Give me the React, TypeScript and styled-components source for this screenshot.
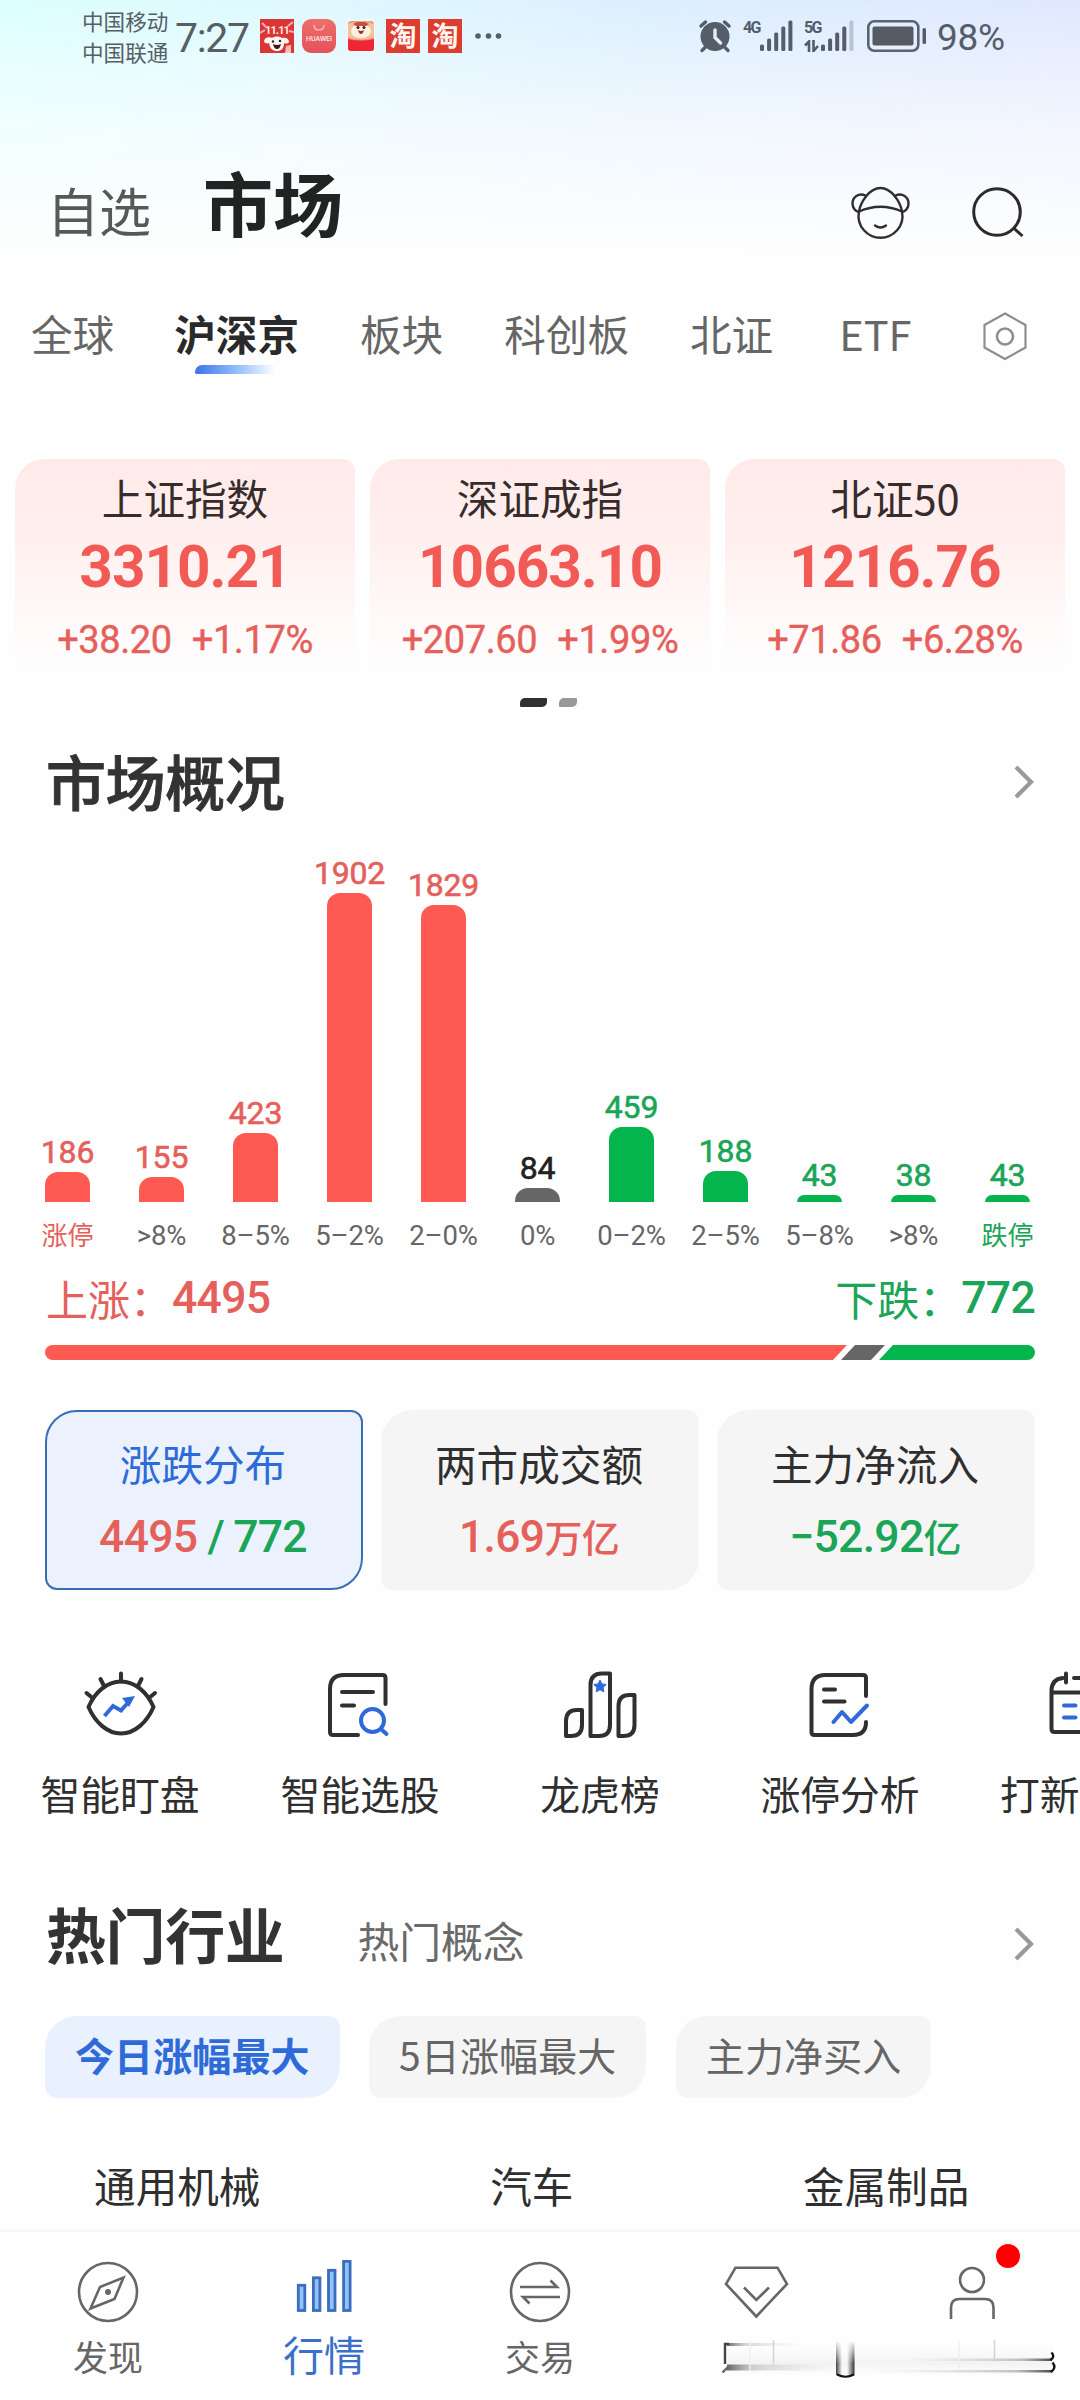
import React from "react";
import styled, { createGlobalStyle, css } from "styled-components";

const RED = "#ff5a52";
const RED_TEXT = "#e5605b";
const GREEN = "#04b44c";
const GREEN_TEXT = "#1ba558";
const BLUE = "#2f6bd8";
const INK = "#2f2f2f";
const GREY = "#666666";

const CJK = `"Noto Sans CJK SC", "Noto Sans", sans-serif`;
const NUM = `Roboto, "Noto Sans CJK SC", sans-serif`;

const GlobalStyle = createGlobalStyle`
  * { box-sizing: border-box; }
  body { margin: 0; background: #fefefe; font-family: ${CJK}; }
`;

const Page = styled.div`
  width: 1080px;
  height: 2400px;
  overflow: hidden;
  display: flex;
  flex-direction: column;
  color: ${INK};
  white-space: nowrap;
  background:
    linear-gradient(180deg, rgba(254, 254, 254, 0) 0, rgba(254, 254, 254, 0.62) 125px, #fefefe 260px),
    linear-gradient(90deg, #dcfffe 0, #dff8ff 30%, #dceffe 60%, #e0e8fe 100%);
`;

/* ---------- status bar ---------- */

const StatusBar = styled.header`
  height: 74px;
  flex: none;
  display: flex;
  align-items: center;
  padding: 0 75px 2px 82px;
  color: #566064;
`;

const Carriers = styled.div`
  width: 93px;
  font-size: 21.6px;
  line-height: 31px;
`;

const Clock = styled.div`
  font: 400 41px/44px ${NUM};
  letter-spacing: -1.3px;
  width: 85px;
  padding-top: 4px;
`;

const AppIcons = styled.div`
  display: flex;
  align-items: center;
  gap: 8px;
`;

const Taobao = styled.div`
  width: 34px;
  height: 34px;
  background: #dd3d2e;
  color: #fff6f0;
  font: 700 27px/31px ${CJK};
  text-align: center;
`;

const HuaweiIcon = styled.div`
  width: 34px;
  height: 34px;
  border-radius: 9px;
  background: linear-gradient(#ee6f6a, #e25259);
  color: #ffe9e6;
  display: flex;
  flex-direction: column;
  align-items: center;
  font: 500 7px/9px ${NUM};
  gap: 4px;
  padding-top: 6px;
`;

const StatusRight = styled.div`
  margin-left: auto;
  display: flex;
  align-items: center;
  color: #555d68;
`;

const Signal = styled.div<{ $gap: number }>`
  display: flex;
  margin-left: ${(p) => p.$gap}px;
  height: 32px;
`;

const NetLabel = styled.div`
  width: 17px;
  display: flex;
  flex-direction: column;
  justify-content: space-between;
  font: 700 16px/16px ${NUM};
  letter-spacing: -1.6px;
`;

const Percent = styled.div`
  font: 400 37px/40px ${NUM};
  letter-spacing: -0.3px;
  margin-left: 10px;
  padding-top: 4px;
  width: 68px;
`;

/* ---------- title and tabs ---------- */

const TitleBar = styled.div`
  height: 216px;
  flex: none;
  display: flex;
  align-items: center;
  padding: 0 56px 0 47px;
`;

const SideTitle = styled.div`
  font-size: 52px;
  line-height: 60px;
  color: #555958;
  padding-top: 56px;
  width: 156px;
`;

const MainTitle = styled.h1`
  margin: 0;
  font-size: 70px;
  line-height: 80px;
  font-weight: 700;
  color: #222424;
  padding-top: 39px;
`;

const TitleActions = styled.div`
  margin-left: auto;
  padding-top: 62px;
  display: flex;
  align-items: center;
  gap: 61px;
`;

const Tabs = styled.nav`
  height: 112px;
  flex: none;
  display: flex;
  align-items: flex-start;
  padding: 12px 52px 0 31px;
`;

const Tab = styled.div<{ $gap: number; $active?: boolean }>`
  display: flex;
  flex-direction: column;
  align-items: center;
  margin-left: ${(p) => p.$gap}px;
  font-size: 41.6px;
  line-height: 62px;
  color: ${(p) => (p.$active ? "#2a2a2a" : GREY)};
  font-weight: ${(p) => (p.$active ? 700 : 400)};
`;

const TabMark = styled.div`
  width: 84px;
  height: 9px;
  border-radius: 8px 0 8px 2px;
  margin-top: 1px;
  background: linear-gradient(90deg, #3d72ea, #9fc6fb 55%, #ffffff 96%);
`;

const TabSettings = styled.div`
  margin-left: auto;
  height: 66px;
  padding-top: 2px;
  display: flex;
  align-items: center;
`;

/* ---------- index cards ---------- */

const IndexRow = styled.section`
  display: flex;
  gap: 15px;
  padding: 57px 15px 0;
  height: 277px;
  flex: none;
`;

const IndexCard = styled.div`
  flex: 1;
  border-radius: 30px 12px 0 0;
  background: linear-gradient(#feeae9 0, #fff0ef 38%, #fff9f9 72%, #fefefe 98%);
  text-align: center;
  color: ${RED_TEXT};
`;

const IndexName = styled.div`
  font-size: 41.6px;
  line-height: 60px;
  color: #362c2c;
  padding-top: 8px;
`;

const IndexValue = styled.div`
  font: 700 58.5px/70px ${NUM};
  letter-spacing: -1px;
  color: #f25a55;
  padding-top: 5px;
`;

const IndexChange = styled.div`
  display: flex;
  justify-content: center;
  gap: 20px;
  font: 400 38px/50px ${NUM};
  letter-spacing: -0.4px;
  -webkit-text-stroke: 0.4px currentColor;
  padding-top: 13px;
`;

const Pager = styled.div`
  height: 34px;
  flex: none;
  display: flex;
  gap: 12px;
  padding: 18.5px 0 0 520px;
`;

const PagerDot = styled.i<{ $active?: boolean }>`
  width: ${(p) => (p.$active ? 27 : 18)}px;
  height: 9px;
  border-radius: 5px 1px;
  background: ${(p) => (p.$active ? "#303030" : "#999")};
`;

/* ---------- market overview ---------- */

const SectionHead = styled.div<{ $height: number }>`
  height: ${(p) => p.$height}px;
  flex: none;
  display: flex;
  align-items: center;
  padding: 0 44px 0 46px;
`;

const SectionTitle = styled.h2<{ $weight: number }>`
  margin: 0;
  font-size: 60px;
  line-height: 80px;
  font-weight: ${(p) => p.$weight};
  color: #333;
  letter-spacing: -0.4px;
  -webkit-text-stroke: ${(p) => (p.$weight < 600 ? "0.9px" : "0")} currentColor;
`;

const SectionAlt = styled.div`
  font-size: 41.8px;
  line-height: 60px;
  color: #6a6a6a;
  padding-top: 14px;
  margin-left: 73px;
`;

const HeadArrow = styled.div<{ $drop: number }>`
  margin-left: auto;
  padding-top: ${(p) => p.$drop}px;
  display: flex;
`;

const Chart = styled.div`
  height: 356px;
  flex: none;
  display: grid;
  grid-template-columns: repeat(11, 94px);
  align-items: end;
  padding-left: 20.5px;
`;

const ChartColumn = styled.div`
  display: flex;
  flex-direction: column;
  align-items: center;
`;

const ChartValue = styled.div<{ $color: string }>`
  font: 400 32px/36px ${NUM};
  letter-spacing: -0.2px;
  -webkit-text-stroke: 0.6px currentColor;
  color: ${(p) => p.$color};
  padding-bottom: 2px;
`;

const ChartBar = styled.div<{ $color: string }>`
  width: 45px;
  border-radius: 13px 13px 0 0;
  background: ${(p) => p.$color};
`;

const ChartLabels = styled.div`
  height: 62px;
  flex: none;
  display: grid;
  grid-template-columns: repeat(11, 94px);
  align-items: center;
  justify-items: center;
  padding: 6px 0 0 20.5px;
`;

const ChartLabel = styled.div<{ $color: string }>`
  color: ${(p) => p.$color};
  font: 400 27.5px/36px ${NUM};
  letter-spacing: -0.2px;
  span { font-size: 26px; letter-spacing: 0; }
`;

const Totals = styled.div`
  height: 66px;
  flex: none;
  display: flex;
  justify-content: space-between;
  padding: 0 45px 0 46px;
`;

const Total = styled.div<{ $color: string }>`
  color: ${(p) => p.$color};
  display: flex;
  align-items: center;
  font-size: 42px;
  line-height: 59px;
  b {
    font: 500 44.5px/60px ${NUM};
    letter-spacing: -0.7px;
    padding-top: 2px;
  }
`;

const Ratio = styled.div`
  height: 15px;
  flex: none;
  margin: 15px 45px 0;
  display: flex;
  border-radius: 7.5px;
  overflow: hidden;
`;

const RatioPart = styled.i<{ $color: string; $shape: string }>`
  background: ${(p) => p.$color};
  clip-path: ${(p) => p.$shape};
  margin-right: -6px;
  &:last-child { margin-right: 0; }
`;

/* ---------- stat cards ---------- */

const StatRow = styled.section`
  display: flex;
  gap: 18px;
  padding: 50px 45px 0;
  height: 230px;
  flex: none;
`;

const StatCard = styled.div<{ $active?: boolean }>`
  flex: 1;
  display: flex;
  flex-direction: column;
  align-items: center;
  border-radius: 32px 12px;
  background: #f5f5f5;
  border: 2px solid #f5f5f5;
  ${(p) =>
    p.$active &&
    css`
      background: #ebf2fe;
      border-color: #3a6db8;
    `}
`;

const StatName = styled.div<{ $active?: boolean }>`
  font-size: 41.6px;
  line-height: 60px;
  padding-top: 21px;
  margin-left: -2px;
  color: ${(p) => (p.$active ? BLUE : INK)};
`;

const StatValue = styled.div<{ $color?: string }>`
  display: flex;
  align-items: baseline;
  font: 500 44.5px/60px ${NUM};
  letter-spacing: -0.7px;
  padding-top: 14px;
  margin-left: -2px;
  color: ${(p) => p.$color};
  small { font-size: 38px; }
`;

const Tint = styled.span<{ $color: string; $gap?: number }>`
  color: ${(p) => p.$color};
  margin-left: ${(p) => p.$gap ?? 0}px;
`;

/* ---------- shortcuts ---------- */

const Shortcuts = styled.section`
  height: 292px;
  flex: none;
  display: flex;
  padding-top: 79px;
  overflow: hidden;
`;

const Shortcut = styled.div`
  width: 240px;
  flex: none;
  display: flex;
  flex-direction: column;
  align-items: center;
  font-size: 39.8px;
  line-height: 56px;
  gap: 24px;
`;

const ShortcutName = styled.div<{ $wide?: boolean }>`
  min-width: ${(p) => (p.$wide ? "160px" : "0")};
`;

/* ---------- hot industries ---------- */

const Chips = styled.div`
  display: flex;
  gap: 29.5px;
  padding: 32px 45px 0;
  height: 114px;
  flex: none;
`;

const Chip = styled.div<{ $active?: boolean }>`
  padding: 0 30px;
  border-radius: 32px 12px;
  font-size: 39px;
  line-height: 77px;
  letter-spacing: 0.1px;
  background: ${(p) => (p.$active ? "#eaf1fe" : "#f5f5f5")};
  color: ${(p) => (p.$active ? BLUE : GREY)};
  font-weight: ${(p) => (p.$active ? 700 : 400)};
`;

const Industries = styled.div`
  height: 131px;
  flex: none;
  display: grid;
  grid-template-columns: repeat(3, 354.5px);
  text-align: center;
  font-size: 41.6px;
  line-height: 60px;
  padding-top: 57px;
`;

/* ---------- bottom navigation ---------- */

const BottomNav = styled.nav`
  flex: 1;
  display: grid;
  grid-template-columns: repeat(5, 216px);
  border-top: 3px solid #f8f8f8;
  background: #fefefe;
`;

const NavItem = styled.div<{ $active?: boolean }>`
  display: flex;
  flex-direction: column;
  align-items: center;
  padding-top: 28px;
  font-size: ${(p) => (p.$active ? 41 : 35)}px;
  line-height: 50px;
  color: ${(p) => (p.$active ? "#3a70c8" : GREY)};
`;

const NavName = styled.div<{ $active?: boolean }>`
  margin-top: ${(p) => (p.$active ? 4 : 7)}px;
`;

const NavPair = styled.div`
  grid-column: span 2;
  display: flex;
  padding: 10px 0 0 56px;
`;

/* ---------- drawings ---------- */

const Drawing = styled.svg`
  display: block;
  flex: none;
  fill: none;
`;

function JdIcon() {
  return (
    <Drawing width="34" height="34" viewBox="0 0 34 34">
      <rect width="34" height="34" fill="#dc3634" />
      <path d="M0 14 5 11M2 4l4 4M28 7l5-4M29 12l5 1" stroke="#f7a9c8" strokeWidth="2" />
      <text x="17" y="15" textAnchor="middle" fontFamily="Roboto, sans-serif" fontWeight="700" fontSize="11" letterSpacing="-0.900" fill="#ffe9e3">11.11</text>
      <path d="M4 22c1-5 7-4 8-3 3-2 7-2 10 0 3-1 6 0 7 3 0 3-3 3-5 2 0 6-3 8-7 8s-7-2-8-8c-2 1-5 0-5-2z" fill="#fff4f4" />
      <circle cx="13" cy="22.500" r="1.200" fill="#222" />
      <circle cx="20" cy="22" r="1.200" fill="#222" />
      <path d="M13 25q4 2 8 0-1 5-4 5t-4-5z" fill="#3a1518" />
      <path d="M26 27l5-1v8h-6z" fill="#fbb" />
    </Drawing>
  );
}

function LionIcon() {
  return (
    <Drawing width="34" height="34" viewBox="0 0 34 34">
      <rect x="3" y="1" width="28" height="32" rx="3" fill="#fff5ee" />
      <rect x="4" y="2" width="26" height="30" rx="3" fill="#e89a80" />
      <path d="M4 5q13-5 26 0v13q-13 5-26 0z" fill="#f0c3a2" />
      <ellipse cx="17" cy="12" rx="10" ry="7" fill="#fff0df" />
      <path d="M9 5l4-2h8l4 2-3 2H12z" fill="#c9503f" />
      <circle cx="14" cy="8.500" r="1.500" fill="#3a2020" />
      <circle cx="20" cy="8.500" r="1.500" fill="#3a2020" />
      <path d="M14 11q3 2 6 0-1 4-3 4t-3-4z" fill="#a02a25" />
      <path d="M4 20q13 3 26 0v9q0 3-3 3H7q-3 0-3-3z" fill="#ee2638" />
    </Drawing>
  );
}

function DotsIcon() {
  return (
    <Drawing width="28" height="8" viewBox="0 0 28 8" style={{ marginLeft: 13 }}>
      <g fill="currentColor">
        <circle cx="3" cy="4" r="2.800" />
        <circle cx="13.500" cy="4" r="2.800" />
        <circle cx="23.500" cy="4" r="2.800" />
      </g>
    </Drawing>
  );
}

function AlarmIcon() {
  return (
    <Drawing width="34" height="34" viewBox="699 19.500 34 34">
      <g stroke="#555d68" strokeLinecap="round">
        <circle cx="716" cy="37" r="14.500" fill="#555d68" stroke="none" />
        <path d="M702 26.500l4.500-4M730 26.500l-4.500-4M707 47l-4 4M725 47l4 4" strokeWidth="3.400" />
        <path d="M716 30.500v7.500l5.500 5.500" stroke="#e3effb" strokeWidth="3.400" />
      </g>
    </Drawing>
  );
}

function SignalBars({ weak }: { weak?: boolean }) {
  const tops = [24.5, 18.5, 12.5, 6.5, 0.5];
  return (
    <Drawing width="33" height="32" viewBox="0 0 33 32">
      {tops.map((top, i) => (
        <rect key={top} x={i * 7.1} y={top} width="4" height={31 - top} rx="1.500" fill={weak && i === 4 ? "#bac4d0" : "#555d68"} />
      ))}
    </Drawing>
  );
}

function BatteryIcon() {
  return (
    <Drawing width="60" height="34" viewBox="867 19.500 60 34" style={{ marginLeft: 13 }}>
      <rect x="868.300" y="21.800" width="50" height="29.500" rx="6" stroke="#5b6370" strokeWidth="2.600" />
      <rect x="872.500" y="27" width="41" height="19" rx="2" fill="#555a63" />
      <rect x="922.500" y="28.500" width="3.500" height="16" rx="1.500" fill="#555d68" />
    </Drawing>
  );
}

function FaceIcon() {
  return (
    <Drawing width="60" height="56" viewBox="850.500 186 60 56">
      <g stroke="#2f2f2f" strokeWidth="2.400" strokeLinecap="round">
        <path d="M859.500 212.500C861 203 870 189 881 189s20 14 21.500 23.500" />
        <path d="M859.500 212.500q21.500-9.500 43 0" />
        <path d="M859.500 212.500c-3 15 9 26.300 21.500 26.300s24.500-11.300 21.500-26.300" />
        <path d="M866 196.500c-7-3-13 1.500-13 8 0 4 2.500 8 6.500 8.500M896 196.500c7-3 13 1.500 13 8 0 4-2.500 8-6.500 8.500" />
        <path d="M875.500 226.500q5.500 4 11 0" />
      </g>
    </Drawing>
  );
}

function SearchIcon() {
  return (
    <Drawing width="53" height="52" viewBox="971.500 186 53 52">
      <g stroke="#2b2b2b" strokeWidth="3">
        <circle cx="997.500" cy="211" r="23.300" />
        <path d="M1013.500 226.500l9.500 8.500" />
      </g>
    </Drawing>
  );
}

function HexIcon() {
  return (
    <Drawing width="46" height="52" viewBox="982 309 46 52">
      <g stroke="#8e8e8e" strokeWidth="2.200">
        <path d="M1005 312.500l20.500 11.500v22.500L1005 358l-20.500-11.500V324z" />
        <circle cx="1005" cy="335.500" r="8" strokeWidth="2.600" />
      </g>
    </Drawing>
  );
}

function Chevron() {
  return (
    <Drawing width="22" height="34" viewBox="0 0 22 34">
      <path d="M2 2l15 15L2 32" stroke="#999" strokeWidth="4.200" />
    </Drawing>
  );
}

const line = { stroke: "#303030", strokeWidth: 4, strokeLinecap: "round", strokeLinejoin: "round" } as const;
const accent = { stroke: BLUE, strokeWidth: 4, strokeLinecap: "round", strokeLinejoin: "round" } as const;

function WatchIcon() {
  return (
    <Drawing width="76" height="72" viewBox="82 1668 76 72">
      <g {...line}>
        <path d="M88.500 1706C95 1691 107 1680.500 121 1680.500s26 10.500 32.500 25.500C147 1721 135 1732.500 121 1732.500S95 1721 88.500 1706z" />
        <path d="M121 1672.500v8M100.500 1678l3 6M141.500 1678l-3 6M86.500 1692l6 5M155 1692l-6 5" />
      </g>
      <path {...accent} strokeLinecap="butt" strokeLinejoin="miter" d="M104.500 1715l8.500-10 8 4.500 8-9" />
      <path d="M122 1697l13-2-6 11z" fill={BLUE} />
    </Drawing>
  );
}

function PickIcon() {
  return (
    <Drawing width="76" height="72" viewBox="322 1668 76 72">
      <path {...line} d="M385.500 1703v-26q0-3-3-3H344q-14 0-14 14v43q0 3 3 3h25M342 1691h31M342 1704.500h12" />
      <g {...accent}>
        <circle cx="372.500" cy="1719.500" r="11.500" />
        <path d="M381.500 1728.500l5 4.500" />
      </g>
    </Drawing>
  );
}

function RankIcon() {
  return (
    <Drawing width="76" height="72" viewBox="562 1668 76 72">
      <g {...line}>
        <path d="M566 1735v-15q0-11 11-11h5v15q0 11-11 11z" />
        <path d="M590.500 1735v-51q0-11.500 11.500-11.500h8V1724q0 11-11 11z" />
        <path d="M618.500 1735v-30q0-11 11-11h5v30q0 11-11 11z" />
      </g>
      <path d="M600 1679l1.900 3.900 4.300.6-3.100 3 .7 4.300-3.800-2-3.800 2 .7-4.300-3.100-3 4.300-.6z" fill={BLUE} stroke={BLUE} />
    </Drawing>
  );
}

function AnalysisIcon() {
  return (
    <Drawing width="76" height="72" viewBox="802 1668 76 72">
      <path {...line} d="M866 1695v-18q0-3-3-3h-37.500q-14 0-14 14v43q0 3 3 3H853q13 0 13-13M824 1688.500h11M824 1700.500h20.500" />
      <path {...accent} d="M833.500 1721l8.500-10 9 10 16-16.500" />
    </Drawing>
  );
}

function CalendarIcon() {
  return (
    <Drawing width="76" height="72" viewBox="1042 1668 76 72">
      <path {...line} d="M1063 1677q-11.500 1-11.500 13v38q0 3 3 3h50V1691M1052 1691.500h52M1066 1672.500v9M1074 1677h22" />
      <path {...accent} d="M1064 1704.500h11.500M1064 1716.500h11.500M1086 1704.500h11" />
    </Drawing>
  );
}

function CompassIcon() {
  return (
    <Drawing width="64" height="64" viewBox="76 2260 64 64">
      <g stroke={GREY} strokeWidth="2.600">
        <circle cx="108" cy="2292" r="29" />
        <path d="M123.500 2277.500l-9 21.500-24 9.500 9.500-21.500z" />
      </g>
      <circle cx="108" cy="2292" r="3" fill={GREY} />
    </Drawing>
  );
}

function QuotesIcon() {
  return (
    <Drawing width="64" height="64" viewBox="292 2260 64 64">
      {[2284, 2276.5, 2269, 2260].map((top, i) => (
        <rect key={top} x={298.3 + i * 15.1} y={top + 1.3} width="6.500" height={2310.5 - top - 1.3} fill="#93c2fb" stroke="#3a6dbd" strokeWidth="2.800" />
      ))}
    </Drawing>
  );
}

function TradeIcon() {
  return (
    <Drawing width="64" height="64" viewBox="508 2260 64 64">
      <g stroke={GREY} strokeWidth="2.600">
        <circle cx="540" cy="2292" r="29" />
        <path d="M520 2287h37l-6.500-6.500M560 2297h-37l6.500 6.500" />
      </g>
    </Drawing>
  );
}

/* Diamond, profile with its unread dot, and the wiped-out caption strip under both. */
function WealthAndProfile() {
  return (
    <Drawing width="372" height="140" viewBox="704 2242 372 140">
      <defs>
        <linearGradient id="fadeOut">
          <stop offset="0" stopColor="#555" stopOpacity="0.900" />
          <stop offset="0.250" stopColor="#999" stopOpacity="0.400" />
          <stop offset="1" stopColor="#ccc" stopOpacity="0" />
        </linearGradient>
        <linearGradient id="fadeIn">
          <stop offset="0" stopColor="#ccc" stopOpacity="0" />
          <stop offset="0.800" stopColor="#888" stopOpacity="0.500" />
          <stop offset="1" stopColor="#333" stopOpacity="0.900" />
        </linearGradient>
        <linearGradient id="haze" x2="0" y2="1">
          <stop offset="0" stopColor="#eee" stopOpacity="0" />
          <stop offset="0.600" stopColor="#e8e8e8" stopOpacity="0.500" />
          <stop offset="1" stopColor="#eee" stopOpacity="0" />
        </linearGradient>
        <linearGradient id="edgeL">
          <stop offset="0" stopColor="#000" stopOpacity="0.750" />
          <stop offset="1" stopColor="#000" stopOpacity="0" />
        </linearGradient>
        <linearGradient id="edgeR">
          <stop offset="0" stopColor="#000" stopOpacity="0" />
          <stop offset="1" stopColor="#000" stopOpacity="0.800" />
        </linearGradient>
        <linearGradient id="topFade" x2="0" y2="1">
          <stop offset="0" stopColor="#fefefe" />
          <stop offset="0.800" stopColor="#fefefe" stopOpacity="0" />
        </linearGradient>
      </defs>
      <g stroke={GREY} strokeWidth="2.600">
        <path d="M735.500 2267.700h42l9.500 16.300-30.700 32.500L726 2284z" />
        <path d="M744 2287.500l12.300 12.500 12.700-12.500" />
        <circle cx="972" cy="2280" r="12" />
        <path d="M951 2319v-11.500q0-8.500 8.500-8.500h25.500q8.500 0 8.500 8.500V2319" />
      </g>
      <circle cx="1008" cy="2256" r="12" fill="#ff0000" />
      <rect x="728" y="2344" width="325" height="32" fill="url(#haze)" />
      <rect x="727" y="2343" width="75" height="3" fill="url(#fadeOut)" />
      <rect x="727" y="2364.500" width="110" height="6" fill="url(#fadeOut)" />
      <rect x="900" y="2358.500" width="152" height="2.500" fill="url(#fadeIn)" />
      <rect x="870" y="2370" width="182" height="2.500" fill="url(#fadeIn)" />
      <path d="M750 2341v30M959 2341v28" stroke="#f0f0f0" strokeWidth="1.500" />
      <path d="M773.500 2340v26M994.500 2340v22" stroke="#d4d4d4" strokeWidth="1.500" />
      <path d="M725 2364v-20h4" stroke="#444" strokeWidth="2.400" />
      <path d="M722.500 2372.500l5.500-5.500" stroke="#666" strokeWidth="2.400" />
      <rect x="836" y="2342" width="6" height="33" fill="url(#edgeL)" />
      <rect x="847" y="2342" width="7.500" height="33" fill="url(#edgeR)" />
      <rect x="834" y="2340" width="22" height="30" fill="url(#topFade)" />
      <path d="M837 2374.500q8.500 4.500 17 0" stroke="#111" strokeWidth="2" />
      <path d="M1051.500 2352.500q4 4-1 7.500M1052.500 2362.500q4.500 5-1.500 9.500" stroke="#111" strokeWidth="2.400" />
    </Drawing>
  );
}

/* ---------- data ---------- */

const indexes = [
  { name: "上证指数", value: "3310.21", diff: "+38.20", pct: "+1.17%" },
  { name: "深证成指", value: "10663.10", diff: "+207.60", pct: "+1.99%" },
  { name: "北证50", value: "1216.76", diff: "+71.86", pct: "+6.28%" },
];

type Trend = "up" | "flat" | "down";
const buckets: { label: string; count: number; trend: Trend; cap?: boolean }[] = [
  { label: "涨停", count: 186, trend: "up", cap: true },
  { label: ">8%", count: 155, trend: "up" },
  { label: "8–5%", count: 423, trend: "up" },
  { label: "5–2%", count: 1902, trend: "up" },
  { label: "2–0%", count: 1829, trend: "up" },
  { label: "0%", count: 84, trend: "flat" },
  { label: "0–2%", count: 459, trend: "down" },
  { label: "2–5%", count: 188, trend: "down" },
  { label: "5–8%", count: 43, trend: "down" },
  { label: ">8%", count: 38, trend: "down" },
  { label: "跌停", count: 43, trend: "down", cap: true },
];
const barColor = { up: RED, flat: "#666", down: GREEN };
const textColor = { up: RED_TEXT, flat: "#222", down: GREEN_TEXT };
const barHeight = (count: number) => Math.max(7, (count * 309) / 1902);

const shortcuts = [
  { name: "智能盯盘", icon: <WatchIcon /> },
  { name: "智能选股", icon: <PickIcon /> },
  { name: "龙虎榜", icon: <RankIcon /> },
  { name: "涨停分析", icon: <AnalysisIcon /> },
  { name: "打新", icon: <CalendarIcon />, wide: true },
];

export default function App() {
  return (
    <Page>
      <GlobalStyle />
      <StatusBar>
        <Carriers>
          <div>中国移动</div>
          <div>中国联通</div>
        </Carriers>
        <Clock>7:27</Clock>
        <AppIcons>
          <JdIcon />
          <HuaweiIcon>
            <Drawing width="12" height="6" viewBox="0 0 12 6">
              <path d="M1 0q0 5 5 5t5-5" stroke="#ffc9c2" strokeWidth="1.200" />
            </Drawing>
            HUAWEI
          </HuaweiIcon>
          <LionIcon />
          <Taobao>淘</Taobao>
          <Taobao>淘</Taobao>
        </AppIcons>
        <DotsIcon />
        <StatusRight>
          <AlarmIcon />
          <Signal $gap={11}>
            <NetLabel>4G</NetLabel>
            <SignalBars />
          </Signal>
          <Signal $gap={11}>
            <NetLabel>
              5G
              <Drawing width="16" height="12" viewBox="0 0 16 12">
                <path d="M1 5.500l4-4V12M9.500 0v11l4.500-5" stroke="#555d68" strokeWidth="2.600" />
              </Drawing>
            </NetLabel>
            <SignalBars weak />
          </Signal>
          <BatteryIcon />
          <Percent>98%</Percent>
        </StatusRight>
      </StatusBar>

      <TitleBar>
        <SideTitle>自选</SideTitle>
        <MainTitle>市场</MainTitle>
        <TitleActions>
          <FaceIcon />
          <SearchIcon />
        </TitleActions>
      </TitleBar>

      <Tabs>
        <Tab $gap={0}>全球</Tab>
        <Tab $gap={60} $active>
          沪深京
          <TabMark />
        </Tab>
        <Tab $gap={61}>板块</Tab>
        <Tab $gap={61}>科创板</Tab>
        <Tab $gap={61}>北证</Tab>
        <Tab $gap={66}>ETF</Tab>
        <TabSettings>
          <HexIcon />
        </TabSettings>
      </Tabs>

      <IndexRow>
        {indexes.map((item) => (
          <IndexCard key={item.name}>
            <IndexName>{item.name}</IndexName>
            <IndexValue>{item.value}</IndexValue>
            <IndexChange>
              <span>{item.diff}</span>
              <span>{item.pct}</span>
            </IndexChange>
          </IndexCard>
        ))}
      </IndexRow>
      <Pager>
        <PagerDot $active />
        <PagerDot />
      </Pager>

      <SectionHead $height={133}>
        <SectionTitle $weight={500}>市场概况</SectionTitle>
        <HeadArrow $drop={5}>
          <Chevron />
        </HeadArrow>
      </SectionHead>
      <Chart>
        {buckets.map((b, i) => (
          <ChartColumn key={i}>
            <ChartValue $color={textColor[b.trend]}>{b.count}</ChartValue>
            <ChartBar $color={barColor[b.trend]} style={{ height: barHeight(b.count) }} />
          </ChartColumn>
        ))}
      </Chart>
      <ChartLabels>
        {buckets.map((b, i) => (
          <ChartLabel key={i} $color={b.cap ? textColor[b.trend] : GREY}>
            {b.cap ? <span>{b.label}</span> : b.label}
          </ChartLabel>
        ))}
      </ChartLabels>
      <Totals>
        <Total $color={RED_TEXT}>
          上涨：<b>4495</b>
        </Total>
        <Total $color={GREEN_TEXT}>
          下跌：<b>772</b>
        </Total>
      </Totals>
      <Ratio>
        <RatioPart $color={RED} $shape="polygon(0 0, 100% 0, calc(100% - 14px) 100%, 0 100%)" style={{ width: 802 }} />
        <RatioPart $color="#666" $shape="polygon(14px 0, 100% 0, calc(100% - 14px) 100%, 0 100%)" style={{ width: 44 }} />
        <RatioPart $color={GREEN} $shape="polygon(14px 0, 100% 0, 100% 100%, 0 100%)" style={{ flex: 1 }} />
      </Ratio>

      <StatRow>
        <StatCard $active>
          <StatName $active>涨跌分布</StatName>
          <StatValue>
            <Tint $color={RED_TEXT}>4495</Tint>
            <Tint $color={GREEN_TEXT} $gap={10}>/</Tint>
            <Tint $color={GREEN_TEXT} $gap={9}>772</Tint>
          </StatValue>
        </StatCard>
        <StatCard>
          <StatName>两市成交额</StatName>
          <StatValue $color={RED_TEXT}>
            1.69<small>万亿</small>
          </StatValue>
        </StatCard>
        <StatCard>
          <StatName>主力净流入</StatName>
          <StatValue $color={GREEN_TEXT}>
            −52.92<small>亿</small>
          </StatValue>
        </StatCard>
      </StatRow>

      <Shortcuts>
        {shortcuts.map((s) => (
          <Shortcut key={s.name}>
            {s.icon}
            <ShortcutName $wide={s.wide}>{s.name}</ShortcutName>
          </Shortcut>
        ))}
      </Shortcuts>

      <SectionHead $height={102}>
        <SectionTitle $weight={700}>热门行业</SectionTitle>
        <SectionAlt>热门概念</SectionAlt>
        <HeadArrow $drop={22}>
          <Chevron />
        </HeadArrow>
      </SectionHead>
      <Chips>
        <Chip $active>今日涨幅最大</Chip>
        <Chip>5日涨幅最大</Chip>
        <Chip>主力净买入</Chip>
      </Chips>
      <Industries>
        <div>通用机械</div>
        <div>汽车</div>
        <div>金属制品</div>
      </Industries>

      <BottomNav>
        <NavItem>
          <CompassIcon />
          <NavName>发现</NavName>
        </NavItem>
        <NavItem $active>
          <QuotesIcon />
          <NavName $active>行情</NavName>
        </NavItem>
        <NavItem>
          <TradeIcon />
          <NavName>交易</NavName>
        </NavItem>
        <NavPair>
          <WealthAndProfile />
        </NavPair>
      </BottomNav>
    </Page>
  );
}
